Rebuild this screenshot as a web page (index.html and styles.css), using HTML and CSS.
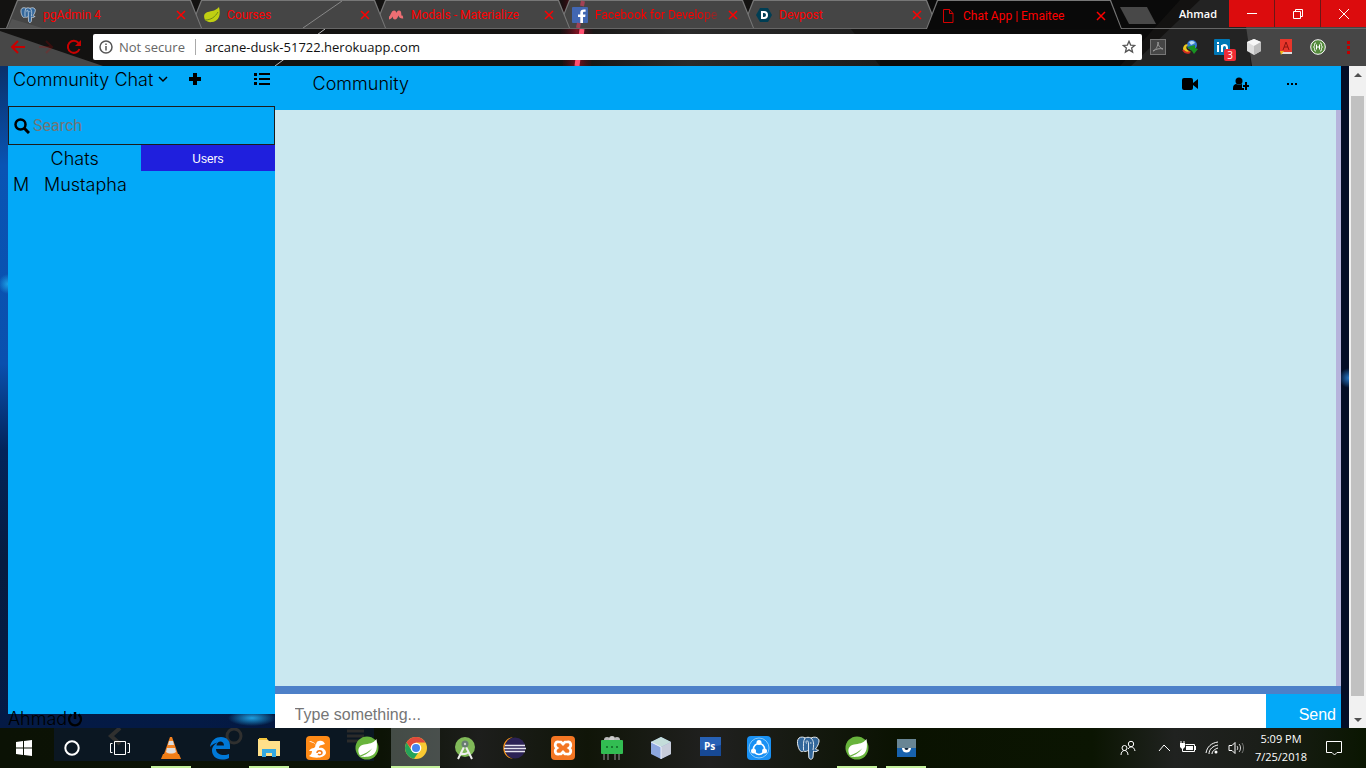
FILE: index.html
```
<!DOCTYPE html>
<html lang="en">
<head>
    <meta charset="UTF-8">
    <meta name="viewport" content="width=device-width, initial-scale=1.0">
    <title>Chat App | Emaitee</title>
    <link rel="stylesheet" href="styles.css">
</head>
<body>

    <!-- shared drawings -->
    <svg width="0" height="0" class="defs" aria-hidden="true">
        <symbol id="x" viewBox="0 0 10 10"><path d="M1 1l8 8M9 1l-8 8" fill="none" stroke="currentColor" stroke-width="1.5"/></symbol>
        <symbol id="elephant" viewBox="0 0 24 24">
            <path d="M3 2c2-1.500 5-1 6 0 2-1 4-1 6 0 3-1.500 6-1 7.500 1s-.5 7-3 10c1 1 2.500 1 3 1-1 2-4 2-5 1l-.5 6c-.3 3-4 3-4.200 0L12.500 14c-1 1-3 2-5 1-2.500 2-4.500-1-5.500-5-.8-3-1-6 1-8z" fill="#33679b" stroke="#e8edf2" stroke-width="1"/>
            <path d="M9 2c-2 3-1.500 7-1.500 12M15 2c3 3 3 6 2 12M9.500 6c2-2 3-1 3 2v6M14 7h1.500M10 7h1" fill="none" stroke="#dfe8f0" stroke-width="1"/>
        </symbol>
        <symbol id="spring" viewBox="0 0 24 24">
            <circle cx="12" cy="12" r="11.500" fill="#68b43c"/>
            <path d="M21.500 3c1 7 1 15-6 17-4 1.500-8 .5-11 1 4-1.500 9-3 13-9-4 4-7 5.500-12.500 7.500C1.500 14 4 9.500 9 8.500c5-.8 9-1 12.500-5.500z" fill="#fff"/>
        </symbol>
    </svg>

    <header class="browser">
        <svg class="theme" viewBox="0 0 1366 66" preserveAspectRatio="none" aria-hidden="true">
            <defs>
                <linearGradient id="beam"><stop offset="0" stop-color="#500010" stop-opacity="0"/><stop offset=".5" stop-color="#c2122b"/><stop offset="1" stop-color="#500010" stop-opacity="0"/></linearGradient>
                <linearGradient id="haze"><stop offset="0" stop-color="#2a2a2a" stop-opacity="0"/><stop offset=".4" stop-color="#2a2a2a"/><stop offset="1" stop-color="#1c1c1c"/></linearGradient>
            </defs>
            <rect width="1366" height="66" fill="#131211"/>
            <path d="M560 28h290l30 38H560z" fill="url(#haze)"/>
            <path d="M880 0h300l-60 66H880z" fill="#0a0a0a"/>
            <path d="M1200 0h45l6 66h-120z" fill="#232323"/>
            <path d="M1242 0h124v66h-114z" fill="#464646"/>
            <path d="M0 31L103 66H0z" fill="#474747"/>
            <path d="M325 29L275 66" stroke="#bbb"/>
            <path d="M559 0h36l-4 66h-28z" fill="url(#beam)" opacity=".6"/>
            <path d="M582 29l-5 37" stroke="#ff5070" stroke-width="5"/>
        </svg>

        <div class="tab-strip">
            <div class="tab">
                <svg class="favicon"><use href="#elephant"/></svg>
                <span class="tab-title">pgAdmin 4</span>
                <button class="tab-close" aria-label="Close tab"><svg><use href="#x"/></svg></button>
            </div>
            <div class="tab">
                <svg class="favicon" viewBox="0 0 16 16"><path d="M15 0c2 8 0 14-7 15-3 .5-5-.5-7-2C-2 6 3 5 8 4c3-.6 5-2 7-4z" fill="#c0cf12"/><path d="M1 13c6 0 10-3 13-8" stroke="#708c14" fill="none"/></svg>
                <span class="tab-title">Courses</span>
                <button class="tab-close" aria-label="Close tab"><svg><use href="#x"/></svg></button>
            </div>
            <div class="tab">
                <svg class="favicon" viewBox="0 0 16 16"><path d="M1 11c3 0 3-6 5-6s-1 6 1 6 2-6 4-6-1 6 4 5" fill="none" stroke="#ee6e73" stroke-width="3"/></svg>
                <span class="tab-title">Modals - Materialize</span>
                <button class="tab-close" aria-label="Close tab"><svg><use href="#x"/></svg></button>
            </div>
            <div class="tab">
                <svg class="favicon" viewBox="0 0 16 16"><rect width="16" height="16" rx="1" fill="#4267b2"/><path d="M11 16v-6h2.200l.3-2.500H11V6c0-.8.3-1.200 1.300-1.200h1.300V2.500C10 2 8.300 3.200 8.300 5.500v2H6V10h2.300v6z" fill="#fff"/></svg>
                <span class="tab-title fade">Facebook for Develope</span>
                <button class="tab-close" aria-label="Close tab"><svg><use href="#x"/></svg></button>
            </div>
            <div class="tab">
                <svg class="favicon" viewBox="0 0 16 16"><path d="M4 1h8l4 7-4 7H4L0 8z" fill="#003e54"/><path d="M6 5h2a3 3 0 0 1 0 6H6z" fill="none" stroke="#fff" stroke-width="2"/></svg>
                <span class="tab-title">Devpost</span>
                <button class="tab-close" aria-label="Close tab"><svg><use href="#x"/></svg></button>
            </div>
            <div class="tab active">
                <svg class="favicon" viewBox="0 0 16 16"><path d="M3.500 1.500h6l3.500 4v9H3.500zM9.500 1.500v4H13" fill="none" stroke="#d40000"/></svg>
                <span class="tab-title">Chat App | Emaitee</span>
                <button class="tab-close" aria-label="Close tab"><svg><use href="#x"/></svg></button>
            </div>
            <button class="new-tab" aria-label="New tab"></button>
            <span class="profile">Ahmad</span>
            <div class="window-buttons">
                <button aria-label="Minimize"><svg viewBox="0 0 12 12"><path d="M1 5.500h10"/></svg></button>
                <button aria-label="Restore"><svg viewBox="0 0 12 12"><path d="M1.500 3.500h7v7h-7zM3.500 3V1.500h7v7H9"/></svg></button>
                <button aria-label="Close"><svg viewBox="0 0 12 12"><path d="M1 1l10 10M11 1L1 11"/></svg></button>
            </div>
            <svg class="glare" viewBox="0 0 1366 28" preserveAspectRatio="none" aria-hidden="true">
                <path d="M342 1l-39 27" stroke="#888"/>
                <path d="M12 19l30 9H8z" fill="#fff" opacity=".08"/>
                <path d="M583 1l-1 5M579 23l-1 5" stroke="#e04060" stroke-width="4" opacity=".6"/>
            </svg>
        </div>

        <div class="toolbar">
            <button class="nav" aria-label="Back"><svg viewBox="0 0 16 16"><path d="M15 8H2M8 2L2 8l6 6"/></svg></button>
            <button class="nav dim" aria-label="Forward"><svg viewBox="0 0 16 16"><path d="M1 8h13M8 2l6 6-6 6"/></svg></button>
            <button class="nav" aria-label="Reload"><svg viewBox="0 0 16 16"><path d="M13.500 10A6 6 0 1 1 12.500 4"/><path class="solid" d="M15 1v6H9z"/></svg></button>
            <div class="omnibox">
                <svg class="info" viewBox="0 0 14 14"><circle cx="7" cy="7" r="6"/><path d="M7 6v4.500M7 3.500V5"/></svg>
                <label for="url">Not secure</label>
                <input id="url" type="text" value="arcane-dusk-51722.herokuapp.com">
                <svg class="star" viewBox="0 0 16 16"><path d="M8 1.500l1.900 4.300 4.600.4-3.500 3 1.100 4.600L8 11.300l-4.100 2.500L5 9.200l-3.500-3 4.600-.4z"/></svg>
            </div>
            <div class="extensions">
                <button aria-label="Acrobat"><svg viewBox="0 0 16 16"><rect x=".5" y=".5" width="15" height="15" fill="#464646" stroke="#777"/><path d="M3 12c3-1 5-5 5-9 0 4 2 6 5 7-3-1-7 0-10 2z" fill="none" stroke="#999"/></svg></button>
                <button aria-label="Download manager"><svg viewBox="0 0 16 16"><circle cx="10" cy="6" r="5" fill="#3579cf"/><path d="M7 3c3-2 5-1 6 1L9 6z" fill="#b8dcf5"/><path d="M1 10c0-4 4-6 5-4-3 2-2 5 3 7-5 1-8-1-8-3z" fill="#edc81e"/><path d="M1 11c2 3 5 3 7 2" stroke="#d42d20" stroke-width="2" fill="none"/><path d="M5 8l8-2v3l3 1-4 5-2-3z" fill="#199222"/></svg></button>
                <button aria-label="LinkedIn"><svg viewBox="0 0 16 16"><rect width="16" height="16" rx="1" fill="#0077b5"/><path d="M4 6v7M4 3v2M8 13V6M8 9c0-4 5-4 5 0v4" fill="none" stroke="#fff" stroke-width="2"/></svg><span class="badge">3</span></button>
                <button aria-label="Cube"><svg viewBox="0 0 16 16"><path d="M8 0l7 3v9l-7 4-7-4V3z" fill="#ddd"/><path d="M8 0l7 3-7 4-7-4z" fill="#f6f6f6"/><path d="M15 3v9l-7 4V7z" fill="#bcbcbc"/></svg></button>
                <button aria-label="Dictionary"><svg viewBox="0 0 16 16"><path d="M2 0h12v13H2z" fill="#e8362b"/><path d="M3 13h11v2H3z" fill="#ddd"/><path d="M5 11l3-8 3 8M6 8h4" fill="none" stroke="#8c1410"/><path d="M2 12h4l-3 4z" fill="#f0b51b"/></svg></button>
                <button aria-label="Header tool"><svg viewBox="0 0 16 16"><circle cx="8" cy="8" r="7.300" fill="#548a3c" stroke="#fff"/><path d="M6 4C3 4 6 7 3.500 8 6 9 3 12 6 12M10 4c3 0 0 3 2.500 4C10 9 13 12 10 12M6.500 5.500v5M9.500 5.500v5M6 8h4" fill="none" stroke="#fff"/></svg></button>
                <button class="menu" aria-label="Menu"><svg viewBox="0 0 16 16"><path d="M7 2h3v3H7zM7 7h3v3H7zM7 12h3v3H7z" fill="#c00000"/></svg></button>
            </div>
        </div>
    </header>

    <div class="page">
        <div class="app">
            <aside class="sidebar">
                <div class="sidebar-panel">
                    <div class="sidebar-header">
                        <span class="room">Community Chat</span>
                        <svg class="chevron" viewBox="0 0 10 10"><path d="M1 3l4 4 4-4" fill="none" stroke="#000" stroke-width="1.500"/></svg>
                        <button class="add" aria-label="New chat"><svg viewBox="0 0 14 14"><path d="M5 1h4v4h4v4H9v4H5V9H1V5h4z"/></svg></button>
                        <button class="list" aria-label="Chat list"><svg viewBox="0 0 16 14"><path d="M5 1h11v2H5zM5 6h11v2H5zM5 11h11v2H5zM0 1h3v3H0zM0 6h3v2H0zM0 10h3v3H0z"/></svg></button>
                    </div>
                    <div class="search">
                        <svg viewBox="0 0 16 16"><circle cx="6.500" cy="6.500" r="5" fill="none" stroke="#000" stroke-width="2.500"/><path d="M10 10l5 5" stroke="#000" stroke-width="3"/></svg>
                        <input type="text" placeholder="Search" aria-label="Search">
                    </div>
                    <div class="switch">
                        <button class="chats">Chats</button>
                        <button class="users">Users</button>
                    </div>
                    <ul class="chat-list">
                        <li><span class="initial">M</span>Mustapha</li>
                    </ul>
                </div>
                <div class="account">
                    <span>Ahmad</span>
                    <button aria-label="Log out"><svg viewBox="0 0 16 16"><path d="M4.500 3.500a6 6 0 1 0 7 0" fill="none" stroke="#000" stroke-width="2.300"/><path d="M8 1v7" stroke="#000" stroke-width="2.500"/></svg></button>
                </div>
            </aside>

            <main class="chat">
                <div class="chat-header">
                    <span class="chat-name">Community</span>
                    <button aria-label="Video call"><svg viewBox="0 0 16 14"><rect y="1" width="11" height="12" rx="2"/><path d="M16 2v10l-5-4V6z"/></svg></button>
                    <button aria-label="Add user"><svg viewBox="0 0 16 14"><circle cx="6" cy="4" r="3.500"/><path d="M0 13v-2c0-3 2-4 3-4 2 1 4 1 6 0v4h2v2z"/><path d="M12 5h2v3h2v2h-2v3h-2v-3h-2V8h2z"/></svg></button>
                    <button aria-label="More"><svg viewBox="0 0 16 14"><path d="M3 6h2v2H3zM7 6h2v2H7zM11 6h2v2h-2z"/></svg></button>
                </div>
                <div class="messages"></div>
                <form class="composer">
                    <input type="text" placeholder="Type something..." aria-label="Message">
                    <button type="button">Send</button>
                </form>
            </main>
        </div>

        <div class="scrollbar">
            <svg viewBox="0 0 17 17"><path d="M5 11l4-4 4 4z"/></svg>
            <div class="thumb"></div>
            <svg viewBox="0 0 17 17"><path d="M5 7l4 4 4-4z"/></svg>
        </div>
    </div>

    <footer class="taskbar">
        <svg class="ghost" viewBox="0 0 320 33" aria-hidden="true">
            <rect width="320" height="33" fill="#0b1722"/>
            <path d="M66 0l-9 8 9 8" fill="none" stroke="#30302f" stroke-width="4"/>
            <circle cx="180" cy="8" r="7" fill="none" stroke="#30302f" stroke-width="3"/>
            <path d="M293 3h17M293 8h17M293 13h17" stroke="#2b2b2a" stroke-width="3"/>
        </svg>
        <div class="system">
            <button aria-label="Start"><svg viewBox="0 0 24 24"><path d="M4 6l7-1v6.500H4zM12 5l8-1v7.500h-8zM4 12.500h7V19l-7-1zM12 12.500h8V20l-8-1z" fill="#fff"/></svg></button>
            <button aria-label="Cortana"><svg viewBox="0 0 24 24"><circle cx="12" cy="12" r="6.700" fill="none" stroke="#fff" stroke-width="2"/></svg></button>
            <button aria-label="Task view"><svg viewBox="0 0 24 24"><path d="M6.500 5.500h11v13h-11zM4.500 7.500h-2v9h2M19.500 7.500h2v9h-2" fill="none" stroke="#fff"/></svg></button>
        </div>
        <div class="apps">
            <button class="open" aria-label="VLC"><svg viewBox="0 0 24 24"><path d="M11 1h2l6 17H5z" fill="#f58220"/><path d="M10 5h4l1 4H9zM8 12h8l1 4c-3 2-7 2-10 0z" fill="#ddd"/><path d="M4 18h16l2 5H2z" fill="#ef7d16"/></svg></button>
            <button aria-label="Edge"><svg viewBox="0 0 24 24"><path d="M2 11C3 4 8 1 13 1c6 0 9 4 9 9v3H8c0 4 4 6 8 6 2 0 4-.5 5-1v4c-2 1-4 1.500-7 1.500-6 0-10-4-10-9 0-4 3-7 6-8-3 .5-6 2-8 4.500zM8.500 9.500H16C16 4 9 4 8.500 9.500z" fill="#0078d7"/></svg></button>
            <button class="open" aria-label="File Explorer"><svg viewBox="0 0 24 24"><path d="M1 3h9l2 2h11v15H1z" fill="#ffe08a"/><path d="M2 2h8v2H2z" fill="#f5c63c"/><path d="M5 21v-8h14v8h-4v-4H9v4z" fill="#34a9e2"/></svg></button>
            <button aria-label="UC Browser"><svg viewBox="0 0 24 24"><rect width="24" height="24" rx="4" fill="#ff8a16"/><path d="M3 5c2 2 4 1 6 3 1 2 0 3-1 4-2 0-4 1-5 3h3c0 2-1 4-3 5 6 3 16 2 17-3 0-4-4-6-7-5 0-2 1-3 3-3l3-1c-1-3-4-4-6-3-2 0-3 2-3 4-2-3-4-4-7-4z" fill="#fff"/><path d="M11 17c0-3 5-3 5 0 0 2-3 2-4 1" fill="none" stroke="#f47a16" stroke-width="1.500"/></svg></button>
            <button aria-label="Spring Tool Suite"><svg><use href="#spring"/></svg></button>
            <button class="open current" aria-label="Chrome"><svg viewBox="0 0 24 24"><circle cx="12" cy="12" r="11" fill="#f9c932"/><path d="M2.500 6.500A11 11 0 0 1 21.500 6.500H12L8 14z" fill="#df493c"/><path d="M2.500 6.500L8 15l6 2-4 5.800A11 11 0 0 1 2.500 6.500z" fill="#25a35a"/><circle cx="12" cy="12" r="5.300" fill="#fff"/><circle cx="12" cy="12" r="4" fill="#4584f0"/></svg></button>
            <button aria-label="Android Studio"><svg viewBox="0 0 24 24"><circle cx="12" cy="11" r="10" fill="#80b958"/><path d="M11 11L5 23M13 11l6 12M7 17c4 2 6 1 9-1" fill="none" stroke="#eee" stroke-width="2"/><circle cx="12" cy="8" r="3.500" fill="#687c72"/><circle cx="12" cy="8" r="1.200" fill="#ccc"/></svg></button>
            <button aria-label="Eclipse"><svg viewBox="0 0 24 24"><path d="M11 1C-2 3-2 21 11 23-1 18 1 5 11 1z" fill="#f79420"/><circle cx="13" cy="12" r="10.500" fill="#2c2255"/><path d="M3 9.500h20M2 12.500h22M3 15.500h20" stroke="#e7e5f0" stroke-width="1.500"/></svg></button>
            <button aria-label="XAMPP"><svg viewBox="0 0 24 24"><rect width="24" height="24" rx="4" fill="#f37623"/><path d="M8 6c-4-1-5 4-2 6-3 2-2 7 2 6h2l2-2 2 2h2c4 1 5-4 2-6 3-2 2-7-2-6h-2l-2 2-2-2z" fill="none" stroke="#fff" stroke-width="2.700"/></svg></button>
            <button aria-label="Genymotion"><svg viewBox="0 0 24 24"><circle cx="7" cy="4" r="3" fill="#bbb"/><circle cx="12" cy="3" r="3" fill="#ccc"/><circle cx="17" cy="4" r="3" fill="#bbb"/><rect x="1" y="4" width="22" height="14" rx="1" fill="#32bd52"/><path d="M6 10h2v2H6zM11 10h2v2h-2zM16 10h2v2h-2z" fill="#177b2f"/><path d="M4 18v6M8 18v6M15 18v6M19 18v6" stroke="#999"/></svg></button>
            <button aria-label="VirtualBox"><svg viewBox="0 0 24 24"><path d="M12 1l10 5v12l-10 5-10-5V6z" fill="#8da7de"/><path d="M12 1l10 5-10 5L2 6z" fill="#c4ddda"/><path d="M22 6v12l-10 5V11z" fill="#c7ccda"/><path d="M2 6l10 5v12" fill="none" stroke="#e9eefb"/></svg></button>
            <button aria-label="Photoshop"><svg viewBox="0 0 24 24"><rect x="2" y="1" width="21" height="19" fill="#174995"/><path d="M2 1h21v8L2 14z" fill="#2761b6"/><text x="6" y="14" class="ps">Ps</text></svg></button>
            <button aria-label="SHAREit"><svg viewBox="0 0 24 24"><rect width="24" height="24" rx="4" fill="#1991f4"/><circle cx="12" cy="12" r="10" fill="none" stroke="#89cafa"/><circle cx="12" cy="13" r="5.500" fill="none" stroke="#fff" stroke-width="1.500"/><g fill="#fff"><circle cx="12" cy="6.500" r="2.500"/><circle cx="6.500" cy="15" r="2.500"/><circle cx="17.500" cy="15" r="2.500"/></g></svg></button>
            <button aria-label="pgAdmin"><svg><use href="#elephant"/></svg></button>
            <button class="open" aria-label="Spring"><svg><use href="#spring"/></svg></button>
            <button class="open" aria-label="Viewer"><svg viewBox="0 0 24 24"><rect x="3" y="3" width="19" height="18" fill="#1762ae"/><path d="M3 3h19v9H3z" fill="#688594"/><path d="M8 12h9a4.500 4.500 0 0 1-9 0z" fill="#fff"/><path d="M10.500 12h4a2 2 0 0 1-4 0z" fill="#10253c"/></svg></button>
        </div>
        <div class="tray">
            <svg viewBox="0 0 16 16"><circle cx="11" cy="4" r="2.700"/><circle cx="4.500" cy="8" r="2.500"/><path d="M1 15c0-6 7-6 7 0M8 9c2-3 6-3 7 2"/></svg>
            <svg class="caret" viewBox="0 0 16 16"><path d="M3 11l5-6 6 6"/></svg>
            <svg viewBox="0 0 16 16"><path d="M5.500 4.500h9v7h-9M15.500 6v4"/><path class="fill" d="M6 6h7v4H6zM0 3h5v4L3 9H2L0 7z"/><path d="M1 1v2M4 1v2M2.500 8v3.500H6"/></svg>
            <svg viewBox="0 0 16 16"><path d="M2 13C3 7 7 3 14 2M5 14c0-5 4-8 9-9M8 14c0-3 3-5 6-6"/><circle class="fill" cx="12" cy="12" r="1.500"/></svg>
            <svg viewBox="0 0 16 16"><path d="M1 5.500h3l3-3v11l-3-3H1z"/><path d="M9 6c1 1 1 3 0 4M11 4c2 2 2 6 0 8" opacity=".8"/><path d="M14 3c2 3 2 7 0 10" opacity=".4"/></svg>
            <div class="clock">
                <span>5:09 PM</span>
                <span>7/25/2018</span>
            </div>
            <svg class="notice" viewBox="0 0 16 16"><path d="M.5 1.500h15v11H11L8.500 15 6 12.500H.5z"/></svg>
        </div>
    </footer>

</body>
</html>
```
FILE: styles.css
```
* {
    margin: 0;
    padding: 0;
    box-sizing: border-box;
}

body {
    font-family: "Open Sans", sans-serif;
    font-size: 12px;
    height: 100vh;
    display: flex;
    flex-direction: column;
    overflow: hidden;
    background: #131211;
}

button {
    border: none;
    background: none;
    font: inherit;
    color: inherit;
    cursor: pointer;
}

input {
    border: none;
    outline: none;
    background: none;
    min-width: 0;
}

svg {
    display: block;
    flex: none;
}

.defs {
    position: absolute;
}

/* Browser frame */
.browser {
    position: relative;
    flex: none;
}

.theme {
    position: absolute;
    width: 100%;
    height: 100%;
}

.tab-strip {
    position: relative;
    display: flex;
    height: 29px;
    padding-left: 6px;
    border-bottom: 1px solid #666;
}

.glare {
    position: absolute;
    left: 0;
    top: 0;
    z-index: 7;
    width: 100%;
    height: 28px;
    pointer-events: none;
}

.tab {
    position: relative;
    display: flex;
    align-items: center;
    flex: 0 1 196px;
    min-width: 0;
    height: 28px;
    margin-right: -12px;
    padding: 2px 16px 0 14px;
    color: #ff0000;
}

.tab::before,
.tab::after {
    content: "";
    position: absolute;
    inset: 0;
    background: #777;
    clip-path: polygon(0 100%, 11px 0, calc(100% - 11px) 0, 100% 100%);
}

.tab::after {
    background: #454545;
    clip-path: polygon(1px 100%, 12px 1px, calc(100% - 12px) 1px, calc(100% - 1px) 100%);
}

.tab > * {
    position: relative;
    z-index: 1;
}

.tab:nth-child(1) { z-index: 5; }
.tab:nth-child(2) { z-index: 4; }
.tab:nth-child(3) { z-index: 3; }
.tab:nth-child(4) { z-index: 2; }
.tab:nth-child(5) { z-index: 1; }

.tab.active {
    z-index: 6;
    height: 29px;
}

.tab.active::after {
    background: #090909;
}

.favicon {
    width: 16px;
    height: 16px;
}

.tab-title {
    flex: 1;
    min-width: 0;
    margin: 0 2px 0 7px;
    font-family: Roboto, sans-serif;
    font-size: 12px;
    line-height: 16px;
    white-space: nowrap;
    overflow: hidden;
}

.fade {
    mask-image: linear-gradient(to right, #000 80%, transparent);
}

.tab-close svg {
    width: 10px;
    height: 10px;
}

.new-tab {
    width: 36px;
    height: 17px;
    margin: 7px 0 0 10px;
    background: #484848;
    clip-path: polygon(0 0, 27px 0, 36px 100%, 9px 100%);
}

.profile {
    margin-left: auto;
    padding-right: 12px;
    font-size: 11px;
    font-weight: 600;
    line-height: 28px;
    color: #fff;
}

.window-buttons {
    display: flex;
    gap: 1px;
    height: 27px;
    background: #6b1717;
}

.window-buttons button {
    width: 45px;
    background: #dc0c0d;
}

.window-buttons svg {
    width: 12px;
    height: 12px;
    margin: 0 auto;
    fill: none;
    stroke: #fff;
}

.toolbar {
    position: relative;
    display: flex;
    align-items: center;
    height: 37px;
    padding: 0 4px 2px;
}

.nav {
    width: 28px;
}

.nav svg {
    width: 16px;
    height: 16px;
    margin: 0 auto;
    fill: none;
    stroke: #c80000;
    stroke-width: 2;
}

.nav .solid {
    fill: #c80000;
    stroke: none;
}

.nav.dim {
    opacity: 0.2;
}

.omnibox {
    flex: 1;
    display: flex;
    align-items: center;
    height: 26px;
    margin-left: 5px;
    padding: 0 6px;
    border-radius: 2px;
    background: #fff;
    font-size: 13px;
}

.omnibox label {
    margin-left: 6px;
    padding-right: 10px;
    border-right: 1px solid #aaa;
    line-height: 16px;
    color: #666;
}

.omnibox input {
    flex: 1;
    margin-left: 9px;
    font: inherit;
    color: #111;
}

.info,
.star {
    width: 14px;
    height: 14px;
    fill: none;
    stroke: #555;
    stroke-width: 1.5;
}

.extensions {
    display: flex;
}

.extensions button {
    position: relative;
    width: 32px;
}

.extensions .menu {
    width: 28px;
}

.extensions svg {
    width: 16px;
    height: 16px;
    margin: 0 auto;
}

.badge {
    position: absolute;
    right: 2px;
    bottom: -6px;
    width: 12px;
    border-radius: 2px;
    background: #f02b35;
    color: #fff;
    font-size: 10px;
    line-height: 12px;
}

/* Chat app */
.page {
    flex: 1;
    min-height: 0;
    display: flex;
    background:
        radial-gradient(circle at 8px 218px, #1ca0e6, transparent 10px),
        radial-gradient(ellipse 24px 8px at 252px 652px, #1f9fe0, transparent),
        radial-gradient(circle at 1349px 312px, #2878c8, transparent 10px),
        linear-gradient(to right, transparent 200px, #030d26 50%),
        linear-gradient(#0a3069, #0954b4 15%, #0a50ae 45%, #03245a 58%, #061c40 75%, #041a45);
}

.app {
    flex: 1;
    min-width: 0;
    display: flex;
    margin: 0 8px;
}

.sidebar {
    width: 20%;
    display: flex;
    flex-direction: column;
    font-family: Inter, sans-serif;
    font-size: 18px;
    font-weight: 300;
}

.sidebar-panel {
    flex: 1;
    background: #03a9f8;
}

.sidebar-header {
    display: flex;
    align-items: center;
    height: 40px;
    padding: 0 5px 14px;
}

.chevron {
    width: 10px;
    height: 10px;
    margin-left: 5px;
}

.add {
    margin-left: 20px;
}

.add svg {
    width: 14px;
    height: 14px;
}

.list {
    margin-left: auto;
}

.list svg {
    width: 16px;
    height: 14px;
}

.search {
    display: flex;
    align-items: center;
    height: 39px;
    padding: 0 5px;
    border: 1px solid #1c1c1c;
}

.search svg {
    width: 16px;
    height: 16px;
}

.search input {
    flex: 1;
    padding-left: 3px;
    font: 16px Roboto, sans-serif;
}

.search input::placeholder {
    color: #757575;
}

.switch {
    display: flex;
    height: 26px;
}

.switch button {
    flex: 1;
}

.switch .users {
    padding-top: 2px;
    background: #1f1fdd;
    color: #fff;
    font: 12px "Liberation Sans", sans-serif;
}

.chat-list {
    list-style: none;
}

.chat-list li {
    display: flex;
    padding: 0 5px;
    line-height: 28px;
}

.initial {
    width: 31px;
}

.account {
    display: flex;
    align-items: center;
    height: 19px;
    margin-top: -5px;
}

.account svg {
    width: 16px;
    height: 16px;
}

.chat {
    flex: 1;
    min-width: 0;
    display: flex;
    flex-direction: column;
}

.chat-header {
    display: flex;
    align-items: center;
    height: 44px;
    padding: 0 24px 9px 38px;
    background: #03a9f8;
}

.chat-name {
    flex: 1;
    font: 300 18px Inter, sans-serif;
}

.chat-header button {
    width: 51px;
}

.chat-header svg {
    width: 16px;
    height: 14px;
    margin: 0 auto;
}

.messages {
    flex: 1;
    background: #cae8f0;
    border-right: 5px solid #b6b4dc;
}

.composer {
    display: flex;
    height: 42px;
    border-top: 8px solid #4d80c8;
    font: 16px "Liberation Sans", sans-serif;
}

.composer input {
    flex: 1;
    padding: 8px 20px 0;
    background: #fff;
    font: inherit;
}

.composer button {
    width: 75px;
    padding: 8px 5px 0 0;
    background: #03a9f8;
    color: #fff;
    text-align: right;
}

.scrollbar {
    display: flex;
    flex-direction: column;
    width: 17px;
    background: #f1f1f1;
}

.scrollbar svg {
    width: 17px;
    height: 17px;
    fill: #505050;
}

.thumb {
    flex: 1;
    margin: 13px 2px 15px;
    background: #c1c1c1;
}

/* Taskbar */
.taskbar {
    position: relative;
    flex: none;
    display: flex;
    height: 40px;
    background: linear-gradient(to right, #0b1205, #0c1305 28%, #1d1e1c 35%, #101508 43%, #20201f 52%, #0a1201 66%, #0b1502 80%, #202220 86%, #1b1e19 92%, #0a1601);
    color: #fff;
}

.ghost {
    position: absolute;
    left: 54px;
    top: 0;
    width: 320px;
    height: 33px;
}

.system,
.apps {
    position: relative;
    display: flex;
}

.system button {
    width: 48px;
}

.apps {
    margin-left: 2px;
}

.apps button {
    position: relative;
    width: 49px;
}

.system svg,
.apps svg {
    width: 24px;
    height: 24px;
    margin: 0 auto;
}

.open::after {
    content: "";
    position: absolute;
    left: 5px;
    right: 4px;
    bottom: 0;
    height: 2px;
    background: #c3f09a;
}

.apps .current {
    background: rgba(150, 160, 165, 0.4);
}

.current::after {
    left: 0;
    right: 0;
}

.ps {
    font: bold 10px "Open Sans", sans-serif;
    fill: #fff;
}

.tray {
    display: flex;
    align-items: center;
    gap: 8px;
    margin-left: auto;
    padding-right: 24px;
}

.tray svg {
    width: 16px;
    height: 16px;
    fill: none;
    stroke: #fff;
}

.tray .fill {
    fill: #fff;
    stroke: none;
}

.tray .caret {
    margin-left: 12px;
}

.clock {
    display: flex;
    flex-direction: column;
    align-items: center;
    width: 58px;
    line-height: 18px;
    font-size: 11px;
}

.tray .notice {
    margin-left: 8px;
}
```
